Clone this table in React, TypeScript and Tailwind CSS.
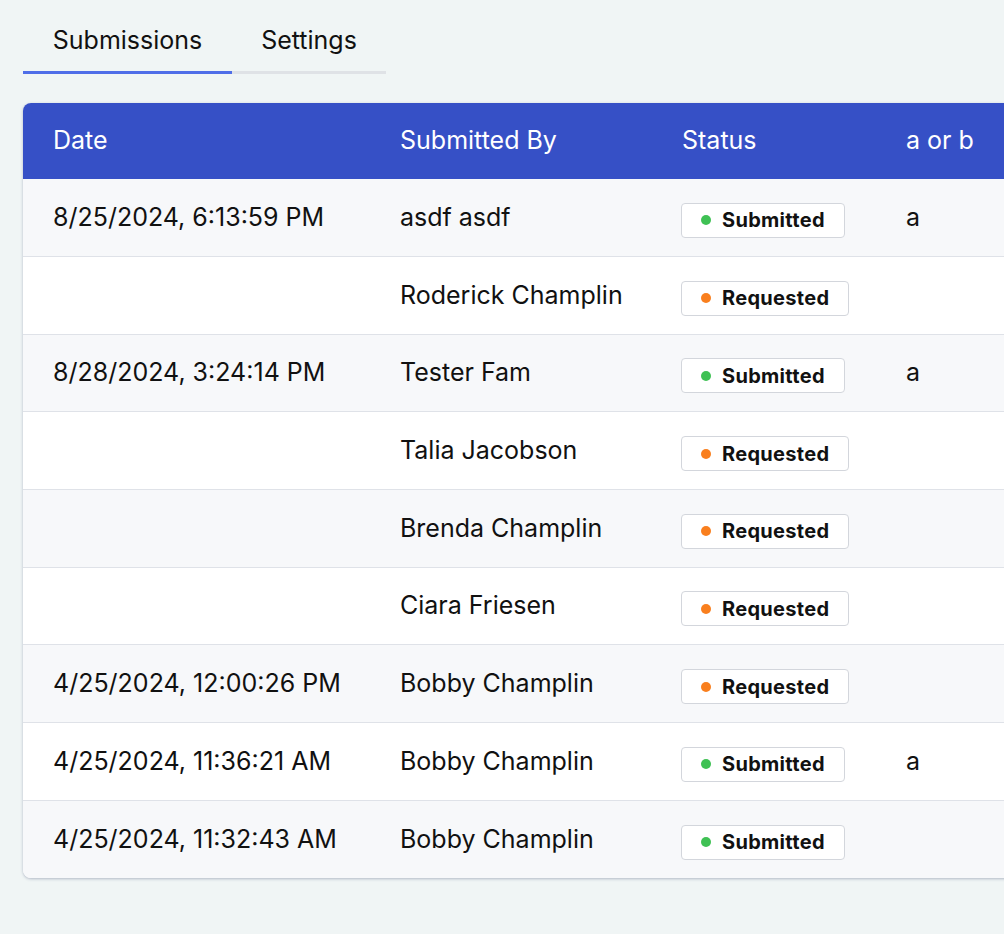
type Status = 'Submitted' | 'Requested';

interface Row {
  date: string;
  by: string;
  status: Status;
  choice: string;
}

const rows: Row[] = [
  { date: '8/25/2024, 6:13:59 PM', by: 'asdf asdf', status: 'Submitted', choice: 'a' },
  { date: '', by: 'Roderick Champlin', status: 'Requested', choice: '' },
  { date: '8/28/2024, 3:24:14 PM', by: 'Tester Fam', status: 'Submitted', choice: 'a' },
  { date: '', by: 'Talia Jacobson', status: 'Requested', choice: '' },
  { date: '', by: 'Brenda Champlin', status: 'Requested', choice: '' },
  { date: '', by: 'Ciara Friesen', status: 'Requested', choice: '' },
  { date: '4/25/2024, 12:00:26 PM', by: 'Bobby Champlin', status: 'Requested', choice: '' },
  { date: '4/25/2024, 11:36:21 AM', by: 'Bobby Champlin', status: 'Submitted', choice: 'a' },
  { date: '4/25/2024, 11:32:43 AM', by: 'Bobby Champlin', status: 'Submitted', choice: '' },
];

function StatusBadge({ status }: { status: Status }) {
  const dot = status === 'Submitted' ? 'bg-[#3fc154]' : 'bg-[#f97f1e]';
  return (
    <span className="inline-flex items-center gap-[11px] h-[35px] pl-[19px] pr-[19px] rounded-[4px] border border-[#d3d6dc] bg-white text-[20px] leading-none font-bold text-[#111] tracking-[0.3px] align-middle">
      <span className={`w-[10px] h-[10px] rounded-full ${dot}`} />
      {status}
    </span>
  );
}

export default function App() {
  return (
    <div className="min-h-screen w-screen overflow-hidden bg-[#f0f5f5] font-['Inter','Liberation_Sans',sans-serif] text-[#111]">
      <div className="pt-[12px] pl-[23px]">
        {/* Tabs */}
        <div className="flex">
          <button className="w-[209px] pt-[13px] pb-[16px] leading-[30px] text-[25px] text-[#111] border-b-[3px] border-[#4f6ee8]">
            Submissions
          </button>
          <button className="w-[154px] pt-[13px] pb-[16px] leading-[30px] text-[25px] text-[#111] border-b-[3px] border-[#dfe2e6]">
            Settings
          </button>
        </div>

        {/* Table card */}
        <div className="mt-[29px] w-[1100px] rounded-[8px] overflow-hidden bg-white shadow-[0_1px_3px_rgba(60,72,110,0.35)]">
          <table className="w-full table-fixed border-collapse text-left">
            <colgroup>
              <col className="w-[347px]" />
              <col className="w-[282px]" />
              <col className="w-[224px]" />
              <col />
            </colgroup>
            <thead>
              <tr className="bg-[#3650c6] text-white h-[76px]">
                <th className="pl-[30px] text-left font-normal text-[25px]">Date</th>
                <th className="pl-[30px] text-left font-normal text-[25px]">Submitted By</th>
                <th className="pl-[30px] text-left font-normal text-[25px]">Status</th>
                <th className="pl-[30px] text-left font-normal text-[25px]">a or b</th>
              </tr>
            </thead>
            <tbody>
              {rows.map((r, i) => (
                <tr
                  key={i}
                  className={`h-[77.67px] text-[25px] ${i % 2 === 0 ? 'bg-[#f7f8fa]' : 'bg-white'} ${i > 0 ? 'border-t border-[#dfe2e8]' : ''}`}
                >
                  <td className="pl-[30px]">{r.date}</td>
                  <td className="pl-[30px]">{r.by}</td>
                  <td className="pl-[29px] pt-[3px]">
                    <StatusBadge status={r.status} />
                  </td>
                  <td className="pl-[30px]">{r.choice}</td>
                </tr>
              ))}
            </tbody>
          </table>
        </div>
      </div>
    </div>
  );
}
